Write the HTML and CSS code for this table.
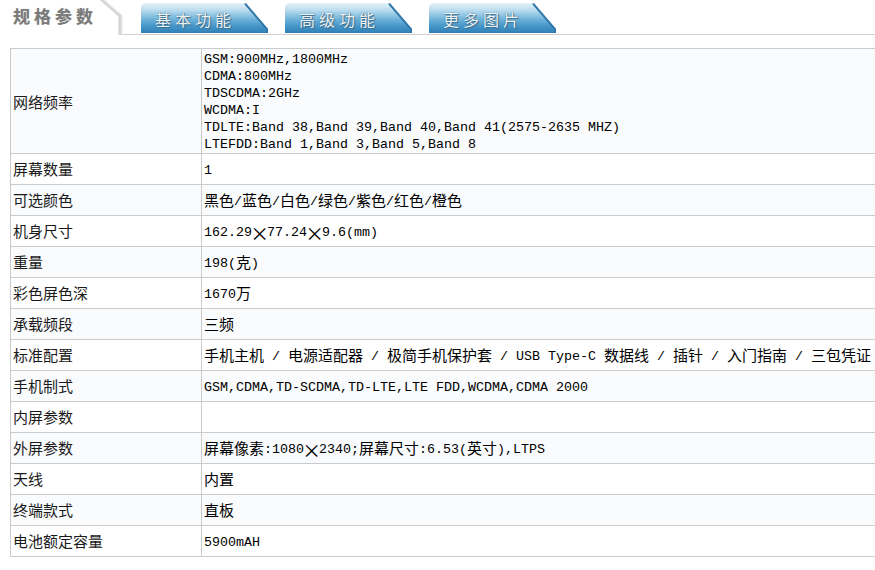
FILE: index.html
```html
<!DOCTYPE html>
<html lang="zh-CN">
<head>
<meta charset="utf-8">
<title>规格参数</title>
<link rel="stylesheet" href="styles.css">
</head>
<body>
<div class="tabs">
  <div class="tab tab-active">
    <svg class="tab-bg" viewBox="0 0 125 35" width="125" height="35" aria-hidden="true">
      <path d="M0 0 H102 L120 15 V35 H0 Z" fill="#fff"/>
      <path d="M101 -1 L120 15.5 V35" fill="none" stroke="#d4d4d4" stroke-width="3"/>
      <path d="M103 -1 L122 15.5 V35" fill="none" stroke="#ececec" stroke-width="1.5"/>
    </svg>
    <span class="tab-label">规格参数</span>
  </div>
  <div class="tab tab-blue">
    <svg class="tab-bg" viewBox="0 0 128 30" width="128" height="30" aria-hidden="true">
      <defs>
        <linearGradient id="g1" x1="0" y1="0" x2="0" y2="1">
          <stop offset="0" stop-color="#e6f2f8"/>
          <stop offset="0.25" stop-color="#b9dbee"/>
          <stop offset="0.55" stop-color="#6cb1d9"/>
          <stop offset="0.8" stop-color="#4293c6"/>
          <stop offset="1" stop-color="#2f80b8"/>
        </linearGradient>
      </defs>
      <path d="M0 30 V5 Q0 0 5 0 H104 L126 26 V30 Z" fill="url(#g1)"/>
      <path d="M104 0.5 L126 26 V30" fill="none" stroke="#2f77aa" stroke-width="2"/>
    </svg>
    <span class="tab-label">基本功能</span>
  </div>
  <div class="tab tab-blue">
    <svg class="tab-bg" viewBox="0 0 128 30" width="128" height="30" aria-hidden="true">
      <path d="M0 30 V5 Q0 0 5 0 H104 L126 26 V30 Z" fill="url(#g1)"/>
      <path d="M104 0.5 L126 26 V30" fill="none" stroke="#2f77aa" stroke-width="2"/>
    </svg>
    <span class="tab-label">高级功能</span>
  </div>
  <div class="tab tab-blue">
    <svg class="tab-bg" viewBox="0 0 128 30" width="128" height="30" aria-hidden="true">
      <path d="M0 30 V5 Q0 0 5 0 H104 L126 26 V30 Z" fill="url(#g1)"/>
      <path d="M104 0.5 L126 26 V30" fill="none" stroke="#2f77aa" stroke-width="2"/>
    </svg>
    <span class="tab-label">更多图片</span>
  </div>
</div>

<table class="spec">
  <colgroup><col class="col-label"><col class="col-value"></colgroup>
  <tbody>
    <tr class="alt tall">
      <th>网络频率</th>
      <td>GSM:900MHz,1800MHz<br>CDMA:800MHz<br>TDSCDMA:2GHz<br>WCDMA:I<br>TDLTE:Band 38,Band 39,Band 40,Band 41(2575-2635 MHZ)<br>LTEFDD:Band 1,Band 3,Band 5,Band 8</td>
    </tr>
    <tr>
      <th>屏幕数量</th>
      <td>1</td>
    </tr>
    <tr class="alt">
      <th>可选颜色</th>
      <td><span class="c">黑色</span>/<span class="c">蓝色</span>/<span class="c">白色</span>/<span class="c">绿色</span>/<span class="c">紫色</span>/<span class="c">红色</span>/<span class="c">橙色</span></td>
    </tr>
    <tr>
      <th>机身尺寸</th>
      <td>162.29<span class="c x">×</span>77.24<span class="c x">×</span>9.6(mm)</td>
    </tr>
    <tr class="alt">
      <th>重量</th>
      <td>198(<span class="c">克</span>)</td>
    </tr>
    <tr>
      <th>彩色屏色深</th>
      <td>1670<span class="c">万</span></td>
    </tr>
    <tr class="alt">
      <th>承载频段</th>
      <td><span class="c">三频</span></td>
    </tr>
    <tr>
      <th>标准配置</th>
      <td><span class="c">手机主机</span> / <span class="c">电源适配器</span> / <span class="c">极简手机保护套</span> / USB Type-C <span class="c">数据线</span> / <span class="c">插针</span> / <span class="c">入门指南</span> / <span class="c">三包凭证</span></td>
    </tr>
    <tr class="alt">
      <th>手机制式</th>
      <td>GSM,CDMA,TD-SCDMA,TD-LTE,LTE FDD,WCDMA,CDMA 2000</td>
    </tr>
    <tr>
      <th>内屏参数</th>
      <td></td>
    </tr>
    <tr class="alt">
      <th>外屏参数</th>
      <td><span class="c">屏幕像素</span>:1080<span class="c x">×</span>2340;<span class="c">屏幕尺寸</span>:6.53(<span class="c">英寸</span>),LTPS</td>
    </tr>
    <tr>
      <th>天线</th>
      <td><span class="c">内置</span></td>
    </tr>
    <tr class="alt">
      <th>终端款式</th>
      <td><span class="c">直板</span></td>
    </tr>
    <tr>
      <th>电池额定容量</th>
      <td>5900mAH</td>
    </tr>
  </tbody>
</table>
</body>
</html>
```

FILE: styles.css
```css
html, body {
  margin: 0;
  padding: 0;
  background: #fff;
  overflow: hidden;
}

body {
  font-family: "Noto Sans CJK SC", sans-serif;
  color: #111;
}

/* ---------- tabs ---------- */
.tabs {
  display: flex;
  align-items: flex-end;
  height: 34px;
  border-bottom: 1px solid #cfcfcf;
  width: 875px;
}

.tab {
  position: relative;
  display: flex;
  align-items: center;
  flex: none;
}

.tab-bg {
  position: absolute;
  left: 0;
  top: 0;
  display: block;
}

.tab-label {
  position: relative;
  font-family: "Noto Sans CJK SC", sans-serif;
  white-space: nowrap;
}

.tab-active {
  width: 125px;
  height: 35px;
  margin-bottom: -1px;
  align-items: flex-start;
}

.tab-active .tab-label {
  margin: 5px 0 0 13px;
  font-size: 17px;
  font-weight: 700;
  letter-spacing: 4px;
  color: #7a7a7a;
  line-height: 22px;
  text-shadow: 0 0 1px #bbb;
}

.tab-blue {
  width: 128px;
  height: 30px;
  margin: 0 0 1px 16px;
}

.tab-blue .tab-label {
  margin: 2px 0 0 14px;
  font-size: 16px;
  letter-spacing: 4px;
  color: #eef3f6;
  line-height: 20px;
  text-shadow: 0 0 1px #2c5c7a, 1px 1px 1px #3f6f8c;
}

/* ---------- spec table ---------- */
.spec {
  margin: 13px 0 0 10px;
  border-collapse: collapse;
  table-layout: fixed;
  width: 880px;
}

.col-label {
  width: 191px;
}

.spec th,
.spec td {
  border: 1px solid #cbcbcb;
  line-height: 17px;
  text-align: left;
  vertical-align: middle;
  white-space: nowrap;
  overflow: hidden;
}

.spec th {
  padding: 6px 2px 7px;
  font-family: "Noto Sans CJK SC", sans-serif;
  font-weight: 400;
  font-size: 15px;
  color: #1a1a1a;
}

.spec td {
  padding: 8px 2px 5px;
  font-family: "Liberation Mono", "Noto Sans CJK SC", monospace;
  font-size: 13.33px;
  color: #000;
}

.spec tr.tall td {
  padding-top: 2px;
  padding-bottom: 0;
}

.spec tr.tall th {
  padding-top: 1px;
  padding-bottom: 1px;
}

.spec tr.alt {
  background: #f9fbfd;
}

.spec td .c {
  font-family: "Noto Sans CJK SC", sans-serif;
  font-size: 15px;
  line-height: 0;
  vertical-align: -1px;
}

.spec td .x {
  display: inline-block;
  width: 15px;
  overflow: visible;
  text-align: center;
  font-size: 15px;
  line-height: 17px;
  height: 17px;
  vertical-align: top;
  transform: scale(1.25);
}
```
